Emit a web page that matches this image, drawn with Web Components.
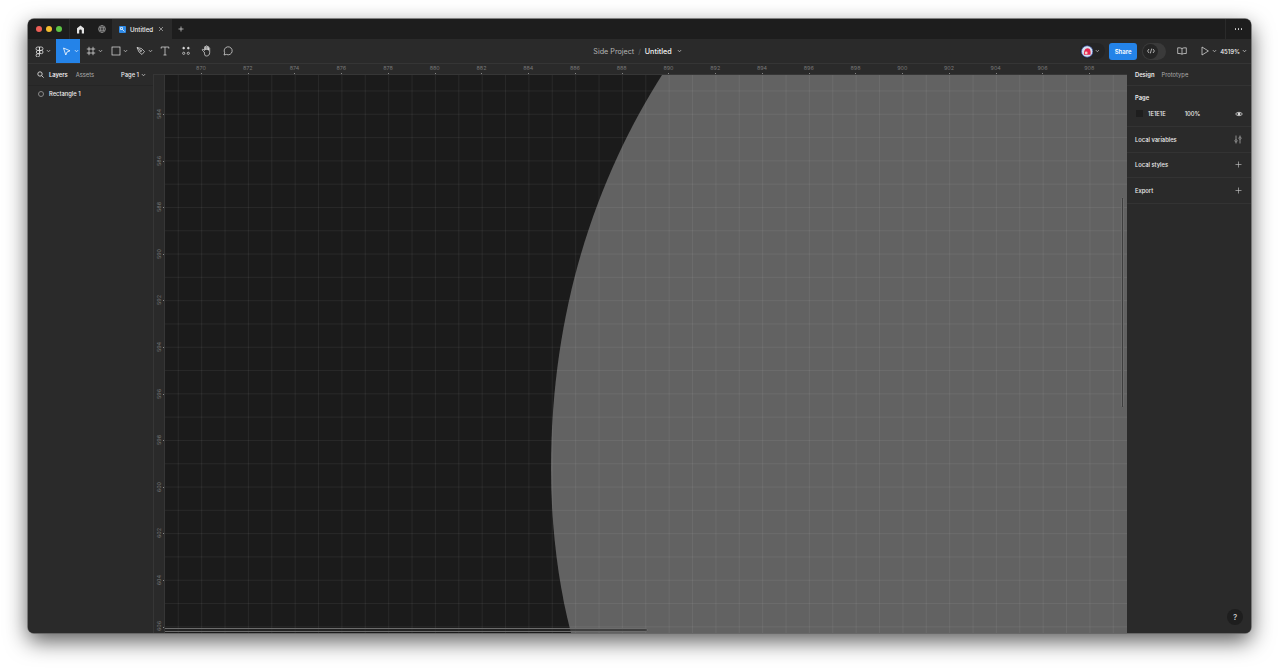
<!DOCTYPE html>
<html>
<head>
<meta charset="utf-8">
<title>Untitled</title>
<style>
  html, body { margin: 0; height: 100%; background: #fff; }
  body { font-family: Inter, "Liberation Sans", sans-serif; overflow: hidden; }
</style>
</head>
<body>
<app-window></app-window>
<script>
const chevron = `<svg class="chev" width="5" height="4" viewBox="0 0 5 4" fill="none" stroke="currentColor" stroke-width=".6"><path d="M.8 1 2.500 2.800 4.200 1"/></svg>`;

class AppWindow extends HTMLElement {
    constructor() {
        super();
        this.shadowDOM = this.attachShadow({ mode: "open" });
    }
    connectedCallback() {
        this.shadowDOM.innerHTML = `
            <style>
                :host { display: block; height: 672px; padding: 19px 29px 39px 28px; box-sizing: border-box; }
                .win {
                    height: 100%;
                    display: flex;
                    flex-direction: column;
                    border-radius: 6px;
                    overflow: hidden;
                    background: #2a2a2a;
                    box-shadow: 0 0 0 .7px #606060, 0 8px 22px rgba(0,0,0,.65);
                }
                .main { flex: 1; display: flex; min-height: 0; }
                .middle { flex: 1; display: flex; flex-direction: column; min-width: 0; }
                .stage { flex: 1; display: flex; min-height: 0; }
            </style>
            <div class="win">
                <tab-bar></tab-bar>
                <tool-bar></tool-bar>
                <div class="main">
                    <layers-panel></layers-panel>
                    <div class="middle">
                        <h-ruler></h-ruler>
                        <div class="stage">
                            <v-ruler></v-ruler>
                            <design-canvas></design-canvas>
                        </div>
                    </div>
                    <props-panel></props-panel>
                </div>
            </div>
        `;
    }
}

class TabBar extends HTMLElement {
    constructor() {
        super();
        this.shadowDOM = this.attachShadow({ mode: "open" });
    }
    connectedCallback() {
        this.shadowDOM.innerHTML = `
            <style>
                :host { display: flex; height: 20px; background: #1d1d1d; color: #e4e4e4; align-items: stretch; flex: none; }
                .lights { display: flex; gap: 4px; align-items: center; padding-left: 8px; width: 33px; box-sizing: content-box; border-right: 1px solid #2a2a2a; }
                .lights i { width: 6px; height: 6px; border-radius: 50%; }
                .slot { width: 21px; display: flex; align-items: center; justify-content: center; }
                .tab { width: 60px; background: #2a2a2a; display: flex; align-items: center; padding-left: 7px; box-sizing: border-box; font-size: 6.2px; font-weight: 500; color: #f0f0f0; }
                .tab .ic { width: 7px; height: 7px; border-radius: 1px; background: #2f8ae6; margin-right: 4px; display: flex; }
                .tab .x { margin-left: 5px; display: flex; }
                .plus { width: 17px; display: flex; align-items: center; justify-content: center; }
                .space { flex: 1; }
                .more { width: 25px; border-left: 1px solid #2a2a2a; display: flex; align-items: center; justify-content: center; gap: 1.4px; }
                .more i { width: 1.4px; height: 1.4px; background: #d8d8d8; border-radius: 50%; }
            </style>
            <div class="lights"><i style="background:#ee5f57"></i><i style="background:#f5bd2f"></i><i style="background:#5ec445"></i></div>
            <div class="slot"><svg width="9" height="9" viewBox="0 0 9 9" fill="#e4e4e4"><path d="M4.500.5 8 3.200V8.500H5.800V5.800a1.300 1.300 0 0 0-2.600 0V8.500H1V3.200z"/></svg></div>
            <div class="slot"><svg width="8" height="8" viewBox="0 0 8 8" fill="none" stroke="#aaa" stroke-width=".6"><circle cx="4" cy="4" r="3.500"/><ellipse cx="4" cy="4" rx="1.500" ry="3.500"/><path d="M.5 4h7M1 2.400h6M1 5.600h6"/></svg></div>
            <div class="tab">
                <span class="ic"><svg width="7" height="7" viewBox="0 0 7 7" fill="none" stroke="#fff" stroke-width=".7"><path d="M1.500 1.500h2v2h-2zM3.500 3.500l2 2"/></svg></span>
                <span>Untitled</span>
                <span class="x"><svg width="6" height="6" viewBox="0 0 6 6" stroke="#ccc" stroke-width=".6"><path d="M1 1l4 4M5 1 1 5"/></svg></span>
            </div>
            <div class="plus"><svg width="6" height="6" viewBox="0 0 6 6" stroke="#ddd" stroke-width=".7"><path d="M3 .5v5M.5 3h5"/></svg></div>
            <div class="space"></div>
            <div class="more"><i></i><i></i><i></i></div>
        `;
    }
}

class ToolBar extends HTMLElement {
    constructor() {
        super();
        this.shadowDOM = this.attachShadow({ mode: "open" });
    }
    connectedCallback() {
        this.shadowDOM.innerHTML = `
            <style>
                :host { display: flex; position: relative; height: 25px; background: #2a2a2a; color: #e6e6e6; align-items: stretch; border-bottom: 1px solid #353535; flex: none; box-sizing: border-box; }
                .tools { display: flex; align-items: stretch; padding-left: 4px; }
                .tool { display: flex; align-items: center; justify-content: center; gap: 2px; box-sizing: border-box; }
                .tool svg.i { flex: none; }
                .active { background: #2483e8; color: #fff; }
                .title { position: absolute; left: 0; right: 0; top: 0; bottom: 0; display: flex; align-items: center; justify-content: center; font-size: 7.2px; gap: 4px; padding-right: 4px; }
                .title .p { color: #b5b5b5; }
                .title .s { color: #666; }
                .title .n { color: #f2f2f2; font-weight: 500; }
                .right { margin-left: auto; display: flex; align-items: center; position: relative; z-index: 1; font-size: 6px; }
                .avatar { display: flex; align-items: center; gap: 2px; background: #242424; border-radius: 8px; height: 16px; padding: 0 5px 0 1px; box-sizing: border-box; width: 25px; margin-right: 4px; }
                .share { width: 28px; height: 17px; background: #2483e8; color: #fff; border-radius: 3px; display: flex; align-items: center; justify-content: center; font-weight: 600; font-size: 6px; margin-right: 5px; }
                .code { width: 24px; height: 17px; background: #3a3a3a; border-radius: 9px; display: flex; align-items: center; margin-right: 11px; }
                .code span { width: 15px; height: 15px; margin-left: 1px; border-radius: 50%; background: #252525; display: flex; align-items: center; justify-content: center; }
                .book { margin-right: 14px; display: flex; }
                .play { display: flex; align-items: center; gap: 3px; margin-right: 3px; }
                .zoom { display: flex; align-items: center; gap: 2px; font-weight: 500; margin-right: 4px; color: #f0f0f0; }
            </style>
            <div class="title"><span class="p">Side Project</span><span class="s">/</span><span class="n">Untitled</span><span style="display:flex;margin-left:1px">${chevron}</span></div>
            <div class="tools">
                <div class="tool" style="width:24px;padding-right:2px"><svg class="i" width="9" height="11" viewBox="0 0 9 11" fill="none" stroke="currentColor" stroke-width=".8"><path d="M4.500 1H2.700a1.700 1.700 0 0 0 0 3.400H4.500zM4.500 1h1.800a1.700 1.700 0 0 1 0 3.400H4.500zM4.500 4.400H2.700a1.700 1.700 0 0 0 0 3.300H4.500zM4.500 7.700H2.700a1.700 1.700 0 1 0 1.800 1.700z"/><circle cx="6.300" cy="6" r="1.700"/></svg>${chevron}</div>
                <div class="tool active" style="width:24px;padding-left:4px"><svg class="i" width="9" height="9" viewBox="0 0 9 9" fill="none" stroke="currentColor" stroke-width=".8"><path d="M1.500 1 8 3.800 5 5 3.800 8z" stroke-linejoin="round"/></svg><span style="display:flex;margin-left:1px">${chevron}</span></div>
                <div class="tool" style="width:25px;padding-left:4px"><svg class="i" width="10" height="10" viewBox="0 0 10 10" fill="none" stroke="currentColor" stroke-width=".7"><path d="M3 .8v8.400M7 .8v8.400M.8 3h8.400M.8 7h8.400"/></svg>${chevron}</div>
                <div class="tool" style="width:25px;padding-left:4px"><svg class="i" width="10" height="10" viewBox="0 0 10 10" fill="none" stroke="currentColor" stroke-width=".7"><rect x="1" y="1" width="8" height="8"/></svg>${chevron}</div>
                <div class="tool" style="width:24px;padding-left:5px"><svg class="i" width="10" height="10" viewBox="0 0 10 10" fill="none" stroke="currentColor" stroke-width=".7"><path d="M1 1.500 5.500 2.500 8.500 5.500 6 8.500 3 6z" stroke-linejoin="round"/><circle cx="4.800" cy="4.800" r=".8"/><path d="M1 1.500 4.200 4.200"/></svg>${chevron}</div>
                <div class="tool" style="width:22px"><svg class="i" width="10" height="10" viewBox="0 0 10 10" fill="none" stroke="currentColor" stroke-width=".7"><path d="M1.200 2.600V1h7.600v1.600M5 1v8M3.500 9h3"/></svg></div>
                <div class="tool" style="width:20px"><svg class="i" width="10" height="10" viewBox="0 0 10 10" fill="none" stroke="currentColor" stroke-width=".7"><path d="M2.700 1 3.800 2.100 2.700 3.200 1.600 2.100zM7.300 1 8.400 2.100 7.300 3.200 6.200 2.100z" fill="currentColor"/><circle cx="2.700" cy="7.300" r="1.100"/><circle cx="7.300" cy="7.300" r="1.100"/></svg></div>
                <div class="tool" style="width:21px"><svg class="i" width="11" height="12" viewBox="0 0 11 12" fill="none" stroke="currentColor" stroke-width=".7"><path d="M3.200 7 1.500 5.500c-.8-.8.200-1.800 1-1L3.500 5.500V2.200c0-1 1.300-1 1.300 0V5 1.500c0-1 1.400-1 1.400 0V5 2c0-1 1.300-1 1.300 0v3.300-1.900c0-1 1.200-1 1.200 0V7.500c0 2.300-1.300 3.500-3.300 3.500S3.900 9.800 3.200 7z" stroke-linejoin="round"/></svg></div>
                <div class="tool" style="width:21px"><svg class="i" width="10" height="10" viewBox="0 0 10 10" fill="none" stroke="currentColor" stroke-width=".7"><path d="M1 9 1.700 6.800A4 4 0 1 1 3.400 8.400z" stroke-linejoin="round"/></svg></div>
            </div>
            <div class="right">
                <div class="avatar">
                    <svg width="13" height="13" viewBox="0 0 13 13"><circle cx="6.500" cy="6.500" r="6" fill="#d4e3ef"/><path d="M3 10c0-4 1-7 4-7s3.500 3 3 7z" fill="#e4264f"/><circle cx="5.500" cy="8" r="1.500" fill="#f7c9c4"/><circle cx="6.500" cy="6.500" r="6" fill="none" stroke="#3a4fb0" stroke-width=".7"/></svg>
                    ${chevron}
                </div>
                <div class="share">Share</div>
                <div class="code"><span><svg width="8" height="6" viewBox="0 0 8 6" fill="none" stroke="#eee" stroke-width=".7"><path d="M2 1 .6 3 2 5M6 1 7.400 3 6 5M4.700.6 3.300 5.400"/></svg></span></div>
                <div class="book"><svg width="10" height="8" viewBox="0 0 10 8" fill="none" stroke="#e6e6e6" stroke-width=".7"><path d="M5 1.500C4 .8 2.500.7.700.8v5.700C2.500 6.400 4 6.500 5 7.200 6 6.500 7.500 6.400 9.300 6.500V.8C7.500.7 6 .8 5 1.500zM5 1.500v5.700"/></svg></div>
                <div class="play"><svg width="8" height="10" viewBox="0 0 8 10" fill="none" stroke="#e6e6e6" stroke-width=".7"><path d="M1 1v8L7.400 5z" stroke-linejoin="round"/></svg>${chevron}</div>
                <div class="zoom"><span>4519%</span>${chevron}</div>
            </div>
        `;
    }
}

class LayersPanel extends HTMLElement {
    constructor() {
        super();
        this.shadowDOM = this.attachShadow({ mode: "open" });
    }
    connectedCallback() {
        this.shadowDOM.innerHTML = `
            <style>
                :host { display: block; width: 125px; flex: none; background: #2a2a2a; color: #eee; font-size: 5.8px; box-sizing: border-box; }
                .head { height: 22px; display: flex; align-items: center; padding: 0 7px 0 9px; border-bottom: 1px solid #252525; box-sizing: border-box; }
                .head .find { margin-right: 5px; }
                .head b { font-weight: 600; margin-right: 8px; }
                .head span { color: #aaa; }
                .page { margin-left: auto; display: flex; align-items: center; gap: 2px; font-weight: 500; color: #eee; }
                .row { height: 17px; display: flex; align-items: center; padding-left: 10px; gap: 5px; font-weight: 500; margin-top: -1px; }
                .row i { width: 4px; height: 4px; border: .7px solid #888; border-radius: 50%; }
            </style>
            <div class="head">
                <svg class="find" width="7" height="7" viewBox="0 0 7 7" fill="none" stroke="#eee" stroke-width=".8"><circle cx="3" cy="3" r="2.200"/><path d="M4.600 4.600 6.600 6.600"/></svg>
                <b>Layers</b><span>Assets</span>
                <div class="page"><span style="color:#eee">Page 1</span>${chevron}</div>
            </div>
            <div class="row"><i></i><span>Rectangle 1</span></div>
        `;
    }
}

class HRuler extends HTMLElement {
    constructor() {
        super();
        this.shadowDOM = this.attachShadow({ mode: "open" });
    }
    connectedCallback() {
        let marks = "";
        for (let n = 870; n <= 908; n += 2) marks += `<span>${n}</span>`;
        this.shadowDOM.innerHTML = `
            <style>
                :host { display: flex; height: 10px; flex: none; background: #2a2a2a; color: #777; font-size: 5.4px; border-bottom: 1px solid #363636; box-sizing: content-box; padding-left: 24.600px; overflow: hidden; }
                span { width: 46.760px; flex: none; text-align: center; line-height: 9.500px; position: relative; }
                span::after { content: ""; position: absolute; left: 50%; bottom: 0; width: 1px; height: 1.500px; background: #888; }
            </style>
            ${marks}
        `;
    }
}

class VRuler extends HTMLElement {
    constructor() {
        super();
        this.shadowDOM = this.attachShadow({ mode: "open" });
    }
    connectedCallback() {
        let marks = "";
        for (let n = 584; n <= 606; n += 2) marks += `<span><em>${n}</em></span>`;
        this.shadowDOM.innerHTML = `
            <style>
                :host { display: flex; flex-direction: column; width: 10px; flex: none; background: #2a2a2a; color: #777; font-size: 5.4px; border-left: 1px solid #363636; border-right: 1px solid #363636; padding-top: 15.700px; overflow: hidden; }
                span { height: 46.600px; flex: none; display: flex; align-items: center; justify-content: center; position: relative; }
                em { font-style: normal; writing-mode: vertical-rl; transform: rotate(180deg); }
                span::after { content: ""; position: absolute; right: 0; top: 50%; width: 1.500px; height: 1px; background: #888; }
            </style>
            ${marks}
        `;
    }
}

class DesignCanvas extends HTMLElement {
    constructor() {
        super();
        this.shadowDOM = this.attachShadow({ mode: "open" });
    }
    connectedCallback() {
        this.shadowDOM.innerHTML = `
            <style>
                :host { display: block; flex: 1; position: relative; background: #1b1b1b; overflow: hidden; }
                svg { position: absolute; left: 0; top: 0; width: 100%; height: 100%; }
                .grid {
                    position: absolute; inset: 0;
                    background-image:
                        linear-gradient(to right, rgba(255,255,255,.06) 1px, transparent 1px),
                        linear-gradient(to bottom, rgba(255,255,255,.06) 1px, transparent 1px);
                    background-size: 23.380px 23.300px;
                    background-position: 12.800px 15.500px;
                }
                .vbar, .hbar { position: absolute; box-sizing: border-box; background: rgba(40,40,40,.6); border: .6px solid #6c6c6c; border-radius: 2px; }
                .vbar { right: 3px; top: 122px; width: 3.500px; height: 211px; }
                .hbar { left: -2px; bottom: 1.500px; width: 485px; height: 4px; }
            </style>
            <svg viewBox="0 0 962 559" preserveAspectRatio="none"><path fill="#626262" d="M497 0C440 90 386 220 386 395C386 450 393 510 406 559H962V0Z"/></svg>
            <div class="grid"></div>
            <div class="vbar"></div>
            <div class="hbar"></div>
        `;
    }
}

class PropsPanel extends HTMLElement {
    constructor() {
        super();
        this.shadowDOM = this.attachShadow({ mode: "open" });
    }
    connectedCallback() {
        this.shadowDOM.innerHTML = `
            <style>
                :host { display: block; width: 124px; flex: none; position: relative; background: #2a2a2a; color: #eee; font-size: 5.8px; font-weight: 500; box-sizing: border-box; }
                .tabs { height: 22px; display: flex; align-items: center; gap: 7px; padding-left: 8px; border-bottom: 1px solid #333; box-sizing: border-box; }
                .tabs b { font-weight: 600; }
                .tabs span { color: #aaa; font-weight: 400; }
                .page { height: 41px; padding: 8px 8px 0; box-sizing: border-box; border-bottom: 1px solid #333; }
                .page b { display: block; font-weight: 600; line-height: 8px; margin-bottom: 8px; }
                .fill { display: flex; align-items: center; }
                .fill i { width: 7px; height: 7px; background: #1e1e1e; margin: 0 5px 0 1px; }
                .fill .pct { margin-left: 19px; }
                .fill svg { margin-left: auto; }
                .sec { height: 25.500px; display: flex; align-items: center; justify-content: space-between; padding: 0 9px 0 8px; border-bottom: 1px solid #333; box-sizing: border-box; }
                .help { position: absolute; right: 8px; bottom: 8px; width: 16px; height: 16px; border-radius: 50%; background: #1e1e1e; display: flex; align-items: center; justify-content: center; font-size: 8px; color: #ccc; }
            </style>
            <div class="tabs"><b>Design</b><span>Prototype</span></div>
            <div class="page">
                <b>Page</b>
                <div class="fill"><i></i><span>1E1E1E</span><span class="pct">100%</span>
                    <svg width="8" height="6" viewBox="0 0 8 6" fill="none" stroke="#eee" stroke-width=".7"><path d="M.5 3C2 .8 6 .8 7.500 3 6 5.200 2 5.200.5 3z"/><circle cx="4" cy="3" r="1" fill="#eee"/></svg>
                </div>
            </div>
            <div class="sec"><span>Local variables</span><svg width="8" height="9" viewBox="0 0 8 9" fill="none" stroke="#ccc" stroke-width=".6"><path d="M2 .5v4.200M6 8.500V4.300M2 7v1.500M6 .5V2"/><circle cx="2" cy="5.800" r="1.100"/><circle cx="6" cy="3.200" r="1.100"/></svg></div>
            <div class="sec"><span>Local styles</span><svg width="7" height="7" viewBox="0 0 7 7" stroke="#ccc" stroke-width=".6"><path d="M3.500.5v6M.5 3.500h6"/></svg></div>
            <div class="sec"><span>Export</span><svg width="7" height="7" viewBox="0 0 7 7" stroke="#ccc" stroke-width=".6"><path d="M3.500.5v6M.5 3.500h6"/></svg></div>
            <div class="help">?</div>
        `;
    }
}

customElements.define("app-window", AppWindow);
customElements.define("tab-bar", TabBar);
customElements.define("tool-bar", ToolBar);
customElements.define("layers-panel", LayersPanel);
customElements.define("h-ruler", HRuler);
customElements.define("v-ruler", VRuler);
customElements.define("design-canvas", DesignCanvas);
customElements.define("props-panel", PropsPanel);
</script>
</body>
</html>
